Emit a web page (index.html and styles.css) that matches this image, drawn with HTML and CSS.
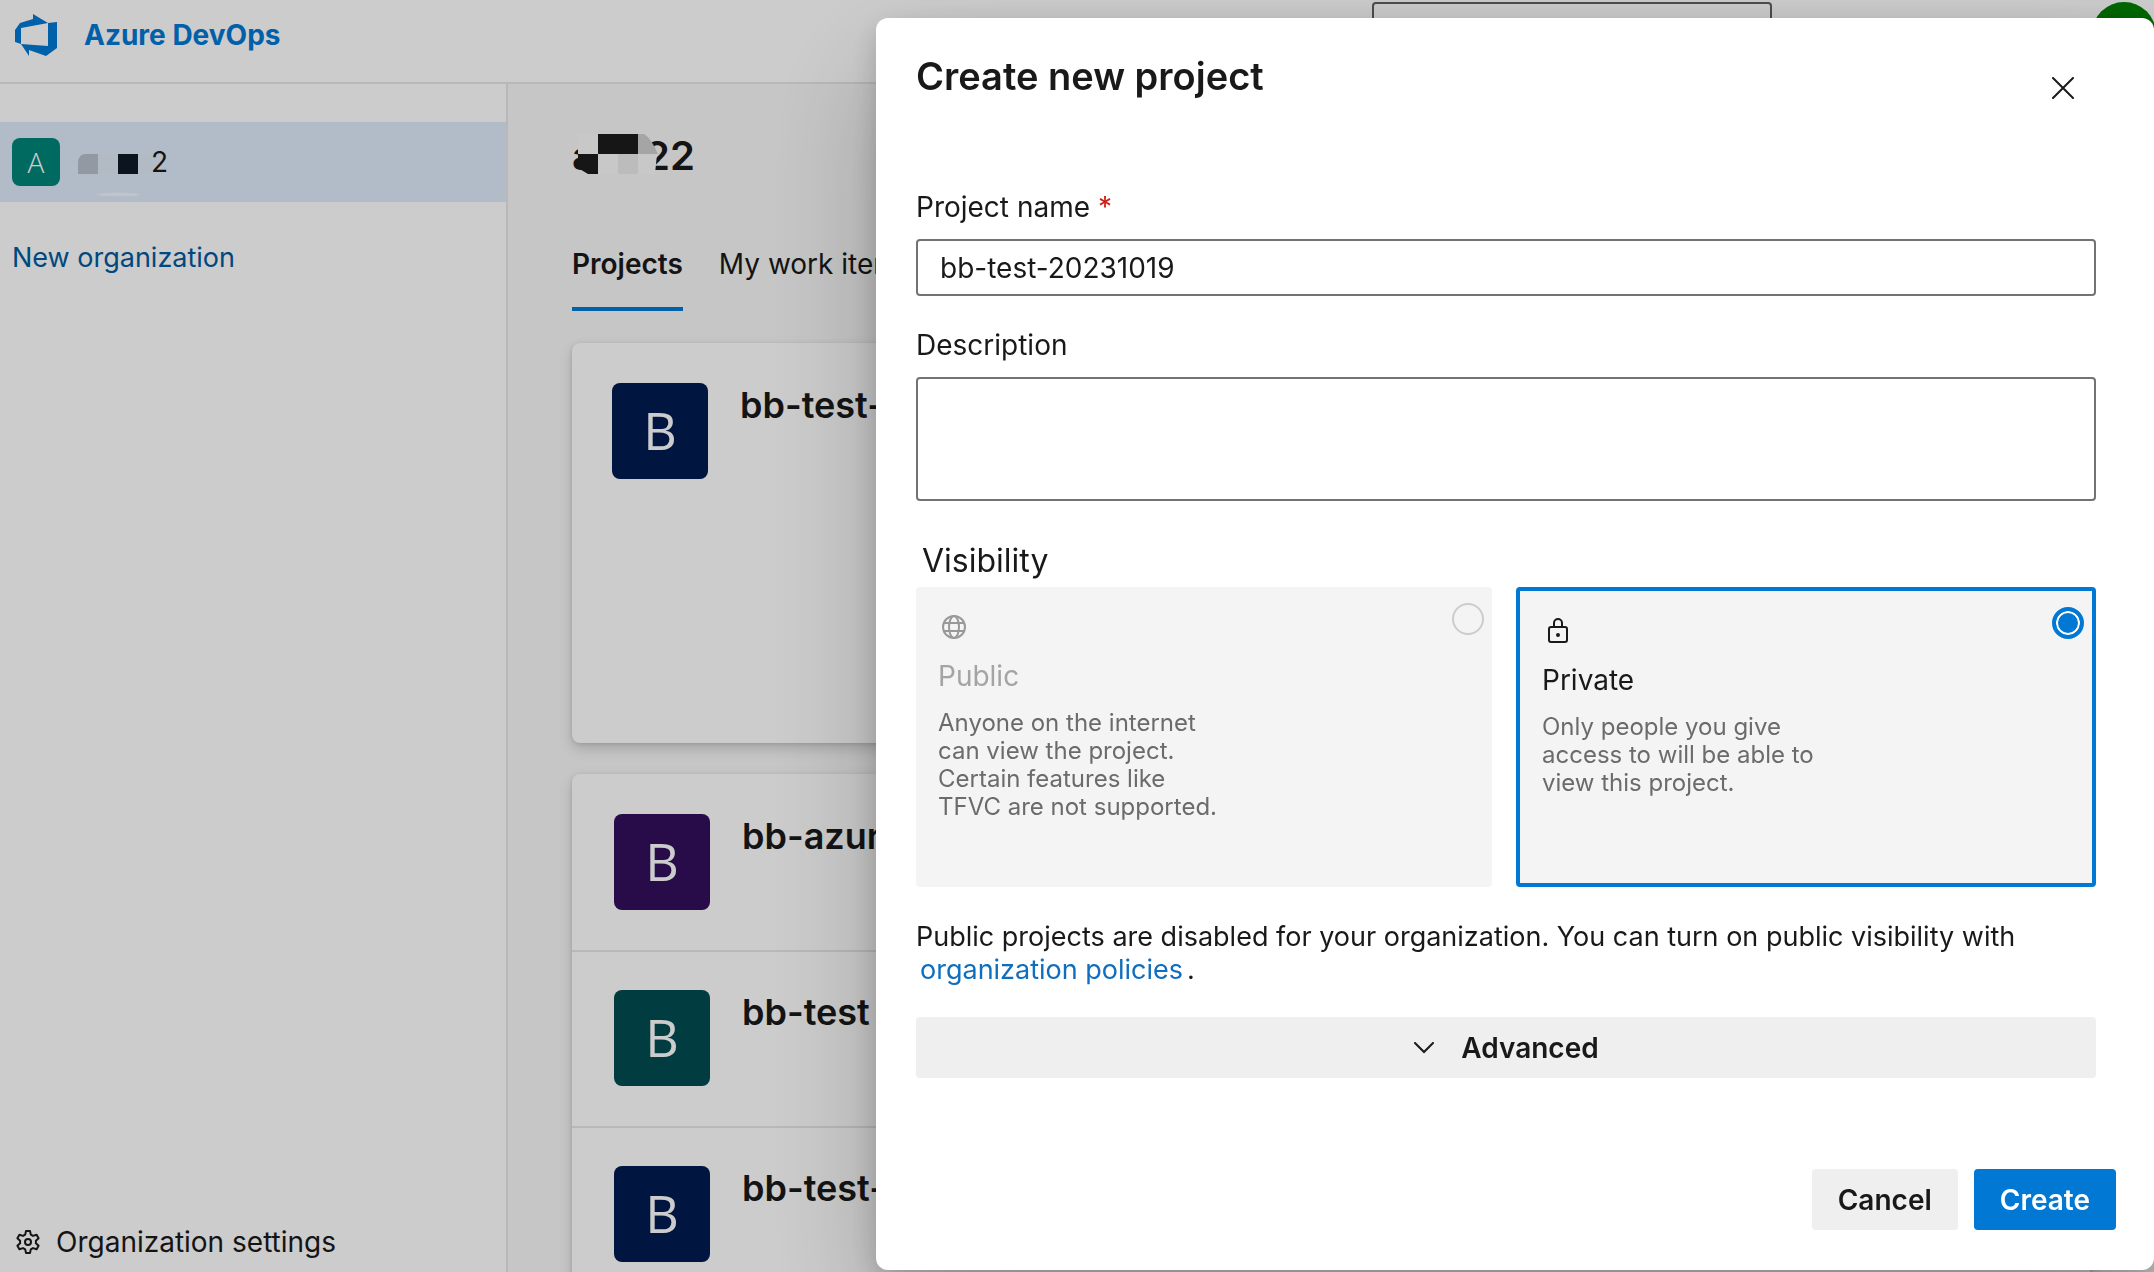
FILE: index.html
```html
<!DOCTYPE html>
<html lang="en">
<head>
<meta charset="utf-8">
<meta name="viewport" content="width=device-width, initial-scale=1">
<title>Azure DevOps - Create new project</title>
<link rel="stylesheet" href="styles.css">
</head>
<body>
<div class="app">
  <header class="topbar">
    <a class="brand" href="#">
      <svg class="brand-logo" viewBox="0 0 42 42" aria-hidden="true"><path fill="currentColor" d="M42 8v26L31 42 14 36v6L6 30l27 2V9l9-1zM33 9 18 0v5L5 9 0 16v12l6 2V14l27-5z"/></svg>
      <span>Azure DevOps</span>
    </a>
    <input class="search" type="search" aria-label="Search">
    <button class="account" type="button" aria-label="Account"></button>
  </header>
  <div class="body">
    <nav class="sidebar" aria-label="Organizations">
      <a class="org" href="#">
        <span class="org-avatar">A</span>
        <span class="org-name">
          <svg class="org-mask" viewBox="0 0 76 44" aria-hidden="true"><path fill="#b8c0cb" d="M0 22V10q1-8 7-8h13v20z"/><path fill="#dfe5ef" d="M20 2h20v20H20zM60 2h14v14l-6 6h-8z" opacity=".5"/><path fill="#101a28" d="M40 2h20v20H40z"/><path fill="#fff" d="M18 42q22-3 44 0l-4 2H24z" opacity=".6"/></svg>2</span>
      </a>
      <a class="new-org" href="#">New organization</a>
      <a class="settings" href="#">
        <svg class="gear" viewBox="0 0 24 24" fill="none" stroke="currentColor" stroke-width="2" stroke-linejoin="round" aria-hidden="true"><path d="M10 1h4l.8 3.6 2.2 1.3 3.6-1.2 2 3.5-2.7 2.5v2.6l2.7 2.5-2 3.5-3.6-1.2-2.2 1.3L14 23h-4l-.8-3.6L7 18.100l-3.600 1.200-2-3.500 2.700-2.500v-2.600L1.400 8.200l2-3.500L7 5.900l2.200-1.300z"/><circle cx="12" cy="12" r="3"/></svg>
        <span>Organization settings</span>
      </a>
    </nav>
    <main class="content">
      <h1 class="org-title"><span>a</span><span>22</span>
        <svg class="title-mask" viewBox="0 0 86 44" aria-hidden="true"><path fill="#fbfbfb" d="M6 2h20v20H6z"/><path fill="#1c1c1c" d="M26 2h40v20H26zM6 22h20v20H16L6 36z"/><path fill="#cfcfcf" d="M66 2h6q7 4 14 20H66z"/><path fill="#fbfbfb" d="M26 22h20v20H26zM66 22h19l-2 20H66z"/><path fill="#ececec" d="M46 22h20v20H46z"/></svg>
      </h1>
      <div class="tabs">
        <a class="tab tab-on" href="#">Projects</a>
        <a class="tab" href="#">My work items</a>
        <a class="tab" href="#">My pull requests</a>
      </div>
      <a class="card card-large" href="#"><span class="tile navy">B</span><span class="name">bb-test-20231018</span></a>
      <div class="card list">
        <a class="row" href="#"><span class="tile purple">B</span><span class="name">bb-azure</span></a>
        <a class="row" href="#"><span class="tile teal">B</span><span class="name">bb-test</span></a>
        <a class="row" href="#"><span class="tile navy">B</span><span class="name">bb-test-1</span></a>
      </div>
    </main>
  </div>
</div>

<div class="scrim">
  <form class="dialog" role="dialog" aria-labelledby="dialog-title">
    <div class="dialog-head">
      <h2 class="dialog-title" id="dialog-title">Create new project</h2>
      <button class="close" type="button" aria-label="Close"><svg viewBox="0 0 22 22" fill="none" stroke="currentColor" stroke-width="2" stroke-linecap="round"><path d="M1 1l20 20M21 1L1 21"/></svg></button>
    </div>
    <label class="label" for="name">Project name <span class="required">*</span></label>
    <input class="field" id="name" type="text" value="bb-test-20231019">
    <label class="label label-next" for="description">Description</label>
    <textarea class="field area" id="description"></textarea>
    <fieldset class="visibility">
      <legend>Visibility</legend>
      <div class="options">
        <label class="option option-off">
          <svg class="option-icon" viewBox="0 0 24 24" fill="none" stroke="currentColor" stroke-width="2" aria-hidden="true"><circle cx="12" cy="12" r="11"/><ellipse cx="12" cy="12" rx="5" ry="11"/><path d="M2 8h20M2 16h20"/></svg>
          <span class="option-name">Public</span>
          <span class="option-text">Anyone on the internet can view the project. Certain features like TFVC are not supported.</span>
          <input class="radio" type="radio" name="visibility" disabled>
        </label>
        <label class="option option-on">
          <svg class="option-icon" viewBox="0 0 24 24" fill="none" stroke="currentColor" stroke-width="2" aria-hidden="true"><rect x="3" y="8" width="18" height="15" rx="2"/><path d="M8 8V4a4 4 0 0 1 8 0v4"/><circle cx="12" cy="16" r="1" fill="currentColor"/></svg>
          <span class="option-name">Private</span>
          <span class="option-text">Only people you give access to will be able to view this project.</span>
          <input class="radio" type="radio" name="visibility" checked>
        </label>
      </div>
    </fieldset>
    <p class="notice">Public projects are disabled for your organization. You can turn on public visibility with <a href="#">organization policies</a>.</p>
    <button class="btn advanced" type="button"><svg class="chevron" viewBox="0 0 20 12" fill="none" stroke="currentColor" stroke-width="2" stroke-linecap="round" aria-hidden="true"><path d="M1 1l9 9 9-9"/></svg>Advanced</button>
    <div class="actions">
      <button class="btn" type="button">Cancel</button>
      <button class="btn primary" type="submit">Create</button>
    </div>
  </form>
</div>
</body>
</html>
```
FILE: styles.css
```css
* { box-sizing: border-box; }

body {
  margin: 0;
  font: 28px/32px Inter, "Liberation Sans", sans-serif;
  color: #191919;
  background: #fff;
}

a { color: inherit; text-decoration: none; }
button, input, textarea { font: inherit; color: inherit; }
h1, h2, p { margin: 0; }

/* Page behind the dialog */
.app {
  display: flex;
  flex-direction: column;
  height: 100vh;
  overflow: hidden;
}

.topbar {
  display: flex;
  align-items: flex-start;
  flex: none;
  height: 84px;
  padding-top: 2px;
  border-bottom: 2px solid #e6e6e6;
}

.brand {
  display: flex;
  align-items: center;
  gap: 27px;
  flex: 1;
  padding: 12px 0 0 15px;
  color: #0078d4;
  font-weight: 700;
}
.brand-logo { width: 42px; height: 42px; }

.search {
  width: 400px;
  height: 64px;
  margin-right: 320px;
  border: 2px solid #606060;
  border-radius: 4px;
  background: transparent;
}

.account {
  flex: none;
  width: 64px;
  height: 64px;
  margin-right: -2px;
  border: 0;
  border-radius: 50%;
  background: #008000;
}

.body { display: flex; flex: 1; min-height: 0; }

.sidebar {
  display: flex;
  flex-direction: column;
  flex: none;
  width: 508px;
  padding: 38px 0 14px;
  border-right: 2px solid #e6e6e6;
}

.org {
  display: flex;
  align-items: center;
  gap: 18px;
  height: 80px;
  padding: 0 12px;
  background: #dfecfb;
}
.org-avatar {
  width: 48px;
  height: 48px;
  border-radius: 8px;
  background: #00857a;
  color: #fff;
  font: 28px/48px "Open Sans", sans-serif;
  font-weight: 300;
  text-align: center;
}
.org-name { position: relative; padding-left: 73px; }
.org-mask { position: absolute; left: 0; top: 6px; width: 76px; height: 44px; }

.new-org { padding: 40px 12px; font-size: 27px; color: #005a9e; }

.settings {
  display: flex;
  align-items: center;
  gap: 16px;
  margin-top: auto;
  padding: 0 16px;
}
.gear { width: 24px; height: 24px; }

.content {
  flex: 1;
  min-width: 0;
  padding: 48px 64px 0;
  background: #f8f8f8;
}

.org-title {
  position: relative;
  display: flex;
  gap: 50px;
  font-size: 40px;
  font-weight: 600;
  line-height: 48px;
}
.title-mask { position: absolute; left: 0; top: 0; width: 86px; height: 44px; }

.tabs { display: flex; gap: 36px; margin-top: 60px; }
.tab { padding: 8px 0 27px; border-bottom: 4px solid transparent; }
.tab-on { font-weight: 600; border-color: #0078d4; }

.card {
  border-radius: 8px;
  background: #fff;
  box-shadow: 0 6px 14px rgba(0, 0, 0, .16), 0 1px 4px rgba(0, 0, 0, .12);
}
.card-large {
  display: flex;
  gap: 32px;
  min-height: 400px;
  margin-top: 32px;
  padding: 40px;
}
.list { margin-top: 31px; padding-top: 2px; }
.row {
  display: flex;
  gap: 32px;
  padding: 38px 42px 40px;
  border-bottom: 2px solid #e6e6e6;
}

.tile {
  flex: none;
  width: 96px;
  height: 96px;
  border-radius: 8px;
  color: #fff;
  font: 52px/94px "Open Sans", sans-serif;
  text-align: center;
}
.navy { background: #001b50; }
.purple { background: #32105c; }
.teal { background: #004b50; }
.name { font-size: 36px; font-weight: 600; line-height: 44px; }

/* Dialog */
.scrim {
  position: fixed;
  inset: 0;
  display: flex;
  justify-content: flex-end;
  padding: 18px 0 2px;
  background: rgba(0, 0, 0, .2);
}

.dialog {
  display: flex;
  flex-direction: column;
  width: 1278px;
  max-width: 100%;
  padding: 32px 58px 40px 40px;
  border-radius: 12px;
  background: #fff;
  box-shadow: 0 50px 116px rgba(0, 0, 0, .22), 0 10px 28px rgba(0, 0, 0, .18);
}

.dialog-head {
  display: flex;
  justify-content: space-between;
  margin-bottom: 89px;
}
.dialog-title { font-size: 38px; font-weight: 600; line-height: 52px; }
.close {
  width: 66px;
  height: 52px;
  padding: 24px 22px 0;
  border: 0;
  background: none;
}
.close svg { display: block; width: 22px; height: 22px; }

.label { margin-bottom: 16px; }
.label-next { margin-top: 33px; }
.required { color: #cd2117; }

.field {
  flex: none;
  width: 100%;
  height: 57px;
  padding: 0 22px;
  border: 2px solid #737373;
  border-radius: 4px;
  background: #fff;
}
.area { height: 124px; padding: 12px 22px; resize: none; }

.visibility { margin: 40px 0 0; padding: 0; border: 0; }
.visibility legend { padding: 0 6px 6px; font-size: 32px; line-height: 40px; }

.options { display: grid; grid-template-columns: 576fr 580fr; gap: 24px; }
.option {
  position: relative;
  display: flex;
  flex-direction: column;
  min-height: 300px;
  padding: 27px 22px;
  border-radius: 4px;
  background: #f4f4f4;
}
.option-on { border: 4px solid #0078d4; }
.option-icon { width: 24px; height: 26px; margin-left: 4px; }
.option-name { margin-top: 19px; line-height: 34px; }
.option-text {
  width: 288px;
  margin-top: 16px;
  font-size: 24px;
  line-height: 28px;
  color: #6b6b6b;
}
.option-off .option-icon { color: #999; }
.option-off .option-name { color: #a4a4a4; }

.radio {
  position: absolute;
  top: 16px;
  right: 8px;
  width: 32px;
  height: 32px;
  margin: 0;
  appearance: none;
  border: 2px solid #ccc;
  border-radius: 50%;
}
.radio:checked {
  border: 4px solid #0078d4;
  background: #0078d4;
  box-shadow: inset 0 0 0 2px #fff;
}

.notice { margin-top: 33px; font-size: 27px; line-height: 33px; }
.notice a { padding: 0 4px; color: #106ebe; }

.btn {
  display: flex;
  align-items: center;
  justify-content: center;
  gap: 26px;
  height: 61px;
  padding: 0 26px;
  border: 0;
  border-radius: 4px;
  background: #efefef;
  font-weight: 600;
}
.advanced { flex: none; margin-top: 31px; }
.chevron { width: 22px; height: 12px; }
.actions {
  display: flex;
  justify-content: flex-end;
  gap: 16px;
  margin: auto -20px 0 0;
}
.primary { background: #0078d4; color: #fff; }
```
